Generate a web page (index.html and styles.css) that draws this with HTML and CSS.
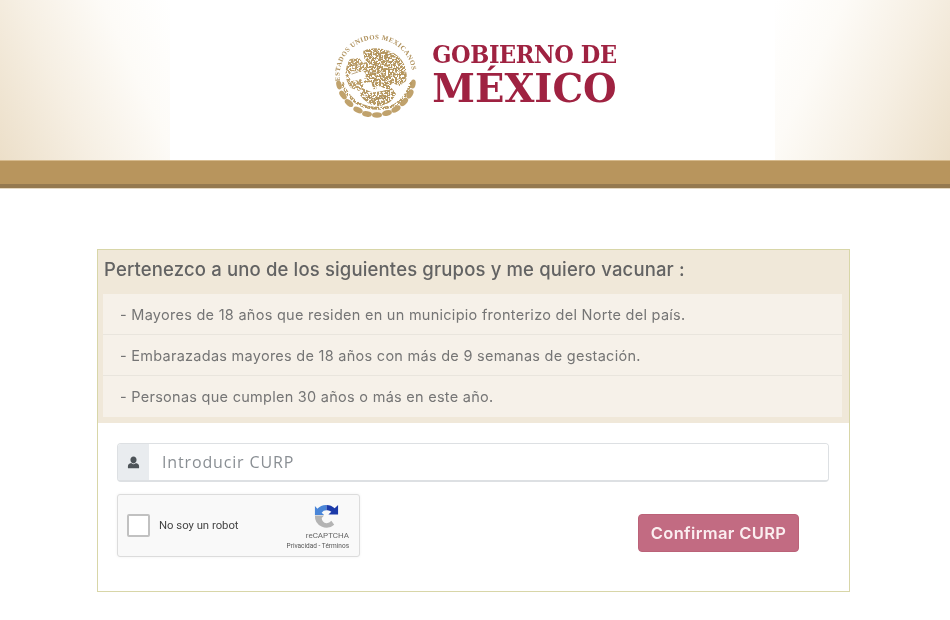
FILE: index.html
```html
<!DOCTYPE html>
<html lang="es">
<head>
<meta charset="utf-8">
<title>Gobierno de México</title>
<link rel="stylesheet" href="styles.css">
</head>
<body>
<header class="top">
  <div class="side side-left"></div>
  <div class="brand">
    <svg class="emblem" viewBox="0 0 84 84" width="84" height="84" aria-hidden="true">
      <defs>
        <path id="ring" d="M6 47A36.400 36.400 0 1 1 78 47"/>
        <filter id="mottle" x="0" y="0" width="100%" height="100%">
          <feTurbulence type="fractalNoise" baseFrequency=".55" numOctaves="2" seed="7" result="n"/>
          <feColorMatrix in="n" type="matrix" values="0 0 0 0 0  0 0 0 0 0  0 0 0 0 0  0 0 0 9 -3.600" result="a"/>
          <feComposite in="SourceGraphic" in2="a" operator="in"/>
        </filter>
      </defs>
      <text class="ring-text"><textPath href="#ring" textLength="114" lengthAdjust="spacing">ESTADOS UNIDOS MEXICANOS</textPath></text>
      <g fill="#c0a26c">
        <ellipse cx="5" cy="51" rx="4.500" ry="2.600" transform="rotate(75 5 51)"/>
        <ellipse cx="9" cy="61" rx="5" ry="2.800" transform="rotate(55 9 61)"/>
        <ellipse cx="15" cy="69" rx="5" ry="2.800" transform="rotate(40 15 69)"/>
        <ellipse cx="24" cy="76" rx="5" ry="2.800" transform="rotate(25 24 76)"/>
        <ellipse cx="33" cy="80" rx="5" ry="2.800" transform="rotate(10 33 80)"/>
        <ellipse cx="43" cy="81" rx="5" ry="2.800"/>
        <ellipse cx="53" cy="79" rx="5" ry="2.800" transform="rotate(-15 53 79)"/>
        <ellipse cx="62" cy="75" rx="5" ry="2.800" transform="rotate(-30 62 75)"/>
        <ellipse cx="70" cy="68" rx="5" ry="2.800" transform="rotate(-45 70 68)"/>
        <ellipse cx="76" cy="60" rx="5" ry="2.800" transform="rotate(-60 76 60)"/>
        <ellipse cx="79" cy="50" rx="4.500" ry="2.600" transform="rotate(-80 79 50)"/>
      </g>
      <g filter="url(#mottle)">
        <rect x="0" y="0" width="84" height="84" fill="none"/>
        <path d="M29 17c10-5 27-3 36 6 7 7 9 17 7 24l-6 5-8-3-3 8-9-5-6 4-3-8-8 1 3-9-6-6 5-6z" fill="#b6975f"/>
        <path d="M16 25l9-1 5 6-3 8-9-1-4 6 6 4 7-2 3 7-5 5-8-3c-6-7-8-18-1-29z" fill="#bb9d68"/>
        <path d="M28 54c6 2 8 5 14 4s10-2 16-4l4 6c-4 8-9 11-17 12-8 0-14-4-19-11z" fill="#b59760"/>
        <path d="M8 48c3 11 12 22 25 25 8 2 20 2 28-2 8-5 14-13 16-23" fill="none" stroke="#b89a63" stroke-width="3"/>
      </g>
      <g fill="none" stroke="#9f8251" stroke-width=".9" stroke-linecap="round" opacity=".75">
        <path d="M36 20l6 6M44 18l4 8M53 20l-1 7M60 26l-4 4M65 34l-6 1M38 30l8 3M34 38l8 1"/>
        <path d="M17 31l6 1M18 40l6-2M48 44l5 6M41 44l-2 8"/>
        <path d="M33 62c6 4 15 4 21 0"/>
      </g>
    </svg>
    <div class="wordmark">
      <div class="w-top">GOBIERNO DE</div>
      <div class="w-bottom">MÉXICO</div>
    </div>
  </div>
  <div class="side side-right"></div>
</header>
<div class="bar"></div>

<main class="panel">
  <section class="panel-head">
    <h1 class="panel-title">Pertenezco a uno de los siguientes grupos y me quiero vacunar :</h1>
    <ul class="groups">
      <li>- Mayores de 18 años que residen en un municipio fronterizo del Norte del país.</li>
      <li>- Embarazadas mayores de 18 años con más de 9 semanas de gestación.</li>
      <li>- Personas que cumplen 30 años o más en este año.</li>
    </ul>
  </section>
  <section class="panel-body">
    <div class="input-group">
      <span class="addon">
        <svg viewBox="0 0 14 14" width="13" height="13" aria-hidden="true"><path fill="#4d5358" d="M7 .5c2 0 3.300 1.500 3.300 3.600S9 8 7 8 3.700 6.200 3.700 4.100 5 .5 7 .5zM4.500 7.600C5.100 8.300 6 8.800 7 8.800s1.900-.5 2.500-1.200c2 .5 3.500 1.600 3.500 3.200v2.400H1v-2.400c0-1.600 1.500-2.700 3.500-3.200z"/></svg>
      </span>
      <input class="curp" type="text" placeholder="Introducir CURP">
    </div>
    <div class="actions">
      <div class="captcha">
        <span class="check"></span>
        <span class="captcha-label">No soy un robot</span>
        <div class="captcha-brand">
          <svg class="captcha-logo" viewBox="0 0 28 28" width="27" height="27" aria-hidden="true">
            <path fill="#b4b4b4" d="M2 13h9.500L9 15.500a6 6 0 0 0 5 5.500 6 6 0 0 0 5-2.500l3 4A12 12 0 0 1 2 13z"/>
            <path fill="#4a86d8" d="M14 2v5.500a6 6 0 0 0-5 2.500l2.500 2.500H2V3l2.500 3A12 12 0 0 1 14 2z"/>
            <path fill="#1c3aa9" d="M14 2a12 12 0 0 1 8.500 3.500L26 2v10H16l3-3a6 6 0 0 0-5-1.500z"/>
          </svg>
          <span class="captcha-name">reCAPTCHA</span>
          <span class="captcha-links">Privacidad - Términos</span>
        </div>
      </div>
      <button class="confirm" type="button">Confirmar CURP</button>
    </div>
  </section>
</main>
</body>
</html>
```

FILE: styles.css
```css
* { box-sizing: border-box; }
html, body { margin: 0; padding: 0; }
body {
  background: #fff;
  font-family: Inter, "Open Sans", "Liberation Sans", sans-serif;
  color: #6f6f6f;
  overflow: hidden;
  filter: blur(.45px);
}
.top { display: flex; height: 160px; background: #fff; }
.side { flex: none; }
.side-left {
  width: 170px;
  background: linear-gradient(65deg, #ecdfc9 0%, #f6efe3 38%, #fdfbf7 72%, #fff 100%);
}
.side-right {
  width: 175px;
  background: linear-gradient(-65deg, #ecdfc9 0%, #f6efe3 38%, #fdfbf7 72%, #fff 100%);
}
.brand {
  flex: 1;
  display: flex;
  align-items: center;
  justify-content: center;
  gap: 14px;
  padding: 0 0 9px 6px;
}
.emblem { flex: none; }
.ring-text {
  font-family: "Liberation Serif", serif;
  font-size: 6.800px;
  font-weight: 700;
  fill: #ad8e58;
}
.wordmark {
  font-family: "DejaVu Serif Condensed", "DejaVu Serif", serif;
  font-weight: 700;
  color: #9f2241;
  line-height: 1;
}
.w-top { font-size: 25px; letter-spacing: -.4px; margin-bottom: 3px; }
.w-bottom { font-family: "DejaVu Serif", serif; font-size: 38.600px; }
.bar {
  height: 28px;
  background: #b8955d;
  border-top: 1px solid #d6ba8d;
  border-bottom: 4px solid #95794f;
  box-shadow: 0 1px 0 #e6d9c2;
}
.panel {
  width: 753px;
  height: 343px;
  margin: 61px 0 0 97px;
  border: 1px solid #d8d6a8;
  background: #fff;
}
.panel-head {
  background: #f0e8d9;
  padding: 0 7px 6px 5px;
}
.panel-title {
  margin: 0 0 0 1px;
  height: 44px;
  font-size: 18.500px;
  font-weight: 500;
  letter-spacing: .15px;
  line-height: 38px;
  color: #636363;
  white-space: nowrap;
}
.groups {
  margin: 0;
  padding: 0;
  list-style: none;
  background: #f6f1e9;
}
.groups li {
  height: 41px;
  padding-left: 17px;
  font-size: 14.500px;
  letter-spacing: .27px;
  line-height: 41px;
  color: #757575;
  border-bottom: 1px solid #e9e5dd;
  white-space: nowrap;
}
.groups li:last-child { border-bottom: 0; }
.panel-body { padding: 20px 20px 0 19px; }
.input-group {
  display: flex;
  height: 39px;
  border: 1px solid #dde0e3;
  border-bottom-width: 2px;
  border-radius: 4px;
  overflow: hidden;
}
.addon {
  flex: none;
  width: 31px;
  display: flex;
  align-items: center;
  justify-content: center;
  background: #e9ecef;
}
.curp {
  flex: 1;
  border: 0;
  outline: 0;
  padding: 0 13px;
  font-family: "Open Sans", "Liberation Sans", sans-serif;
  font-size: 16px;
  letter-spacing: .85px;
  background: #fff;
}
.curp::placeholder { color: #8a8f94; opacity: 1; }
.actions {
  display: flex;
  align-items: flex-start;
  justify-content: space-between;
  margin-top: 12px;
  padding-right: 30px;
}
.captcha {
  width: 243px;
  height: 63px;
  display: flex;
  align-items: center;
  background: #f9f9f9;
  border: 1px solid #dcdcdc;
  border-radius: 3px;
  box-shadow: 0 0 3px rgba(0, 0, 0, .06);
  padding: 0 10px 0 9px;
}
.check {
  flex: none;
  width: 23px;
  height: 23px;
  background: #fff;
  border: 2px solid #c1c1c1;
  border-radius: 2px;
}
.captcha-label {
  margin-left: 9px;
  font-family: Roboto, "Liberation Sans", sans-serif;
  font-size: 11.300px;
  color: #444;
}
.captcha-brand {
  margin-left: auto;
  height: 100%;
  display: flex;
  flex-direction: column;
  align-items: flex-end;
  padding-top: 8px;
  color: #666;
  font-family: Roboto, "Liberation Sans", sans-serif;
}
.captcha-logo { margin-right: 9px; }
.captcha-name { font-size: 8px; line-height: 10px; margin-top: 1px; white-space: nowrap; }
.captcha-links { font-size: 6.500px; line-height: 11px; white-space: nowrap; color: #555; }
.confirm {
  width: 161px;
  height: 38px;
  margin-top: 20px;
  border: 1px solid #bb6278;
  border-radius: 4px;
  background: #c26b82;
  color: #fbeef0;
  font-family: Inter, "Open Sans", sans-serif;
  font-size: 16.500px;
  letter-spacing: .35px;
  font-weight: 600;
  white-space: nowrap;
  padding: 0;
}
```
